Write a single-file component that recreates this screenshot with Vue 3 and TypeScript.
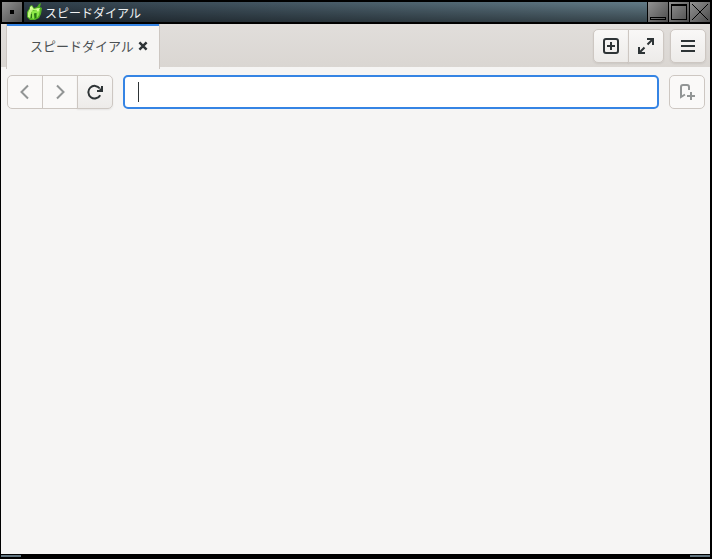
<script setup lang="ts">
import { ref } from 'vue'

const title = ref('スピードダイアル')
const address = ref('')
</script>

<template>
  <div class="window">
    <header class="titlebar">
      <button class="frame-btn" type="button" aria-label="Window menu">
        <svg width="20" height="20" viewBox="0 0 20 20" shape-rendering="crispEdges"><rect x="8" y="8" width="4" height="4" /></svg>
      </button>
      <div class="caption">
        <svg class="app-icon" width="16" height="18" viewBox="0 0 16 18">
          <path d="M4 3L6 2L8 5L11 4L13 1L15 0L14 4L16 5L15 11L13 15L9 17L4 17L1 14L1 9L3 6Z" fill="#4fae22" />
          <path d="M3 7L2 10L2 14L4 15L5 10L7 7L10 7L14 6L12 5L8 6L6 4Z" fill="#c0f67e" />
          <path d="M6 8L10 7L14 7L13 12L11 15L11 10L8 10L8 16L5 15Z" fill="#8ce648" />
          <path d="M4 4L6 3L7 6L4 7Z M10 6L14 5L12 9Z" fill="#d8ff9c" />
          <path d="M5 11L6 11L6 15L5 15Z M8 11L10 10L10 15L9 15Z" fill="#2b721a" />
        </svg>
        <span class="caption-text">{{ title }}</span>
      </div>
      <button class="frame-btn" type="button" aria-label="Minimize">
        <svg width="20" height="20" viewBox="0 0 20 20" shape-rendering="crispEdges"><rect x="2.500" y="15.500" width="15" height="2" fill="none" stroke="#000" /></svg>
      </button>
      <button class="frame-btn" type="button" aria-label="Maximize">
        <svg width="20" height="20" viewBox="0 0 20 20" shape-rendering="crispEdges"><path d="M2.500 2.500h15v15h-15zM2 3.500h16" fill="none" stroke="#000" /></svg>
      </button>
      <button class="frame-btn" type="button" aria-label="Close">
        <svg width="20" height="20" viewBox="0 0 20 20" shape-rendering="crispEdges"><path d="M2 2L18 18M18 2L2 18" fill="none" stroke="#000" /></svg>
      </button>
    </header>

    <main class="browser">
      <div class="tabbar">
        <div class="tab">
          <span>{{ title }}</span>
          <button class="tab-close" type="button" aria-label="Close tab">
            <svg width="10" height="10" viewBox="0 0 10 10"><path d="M1.400 1.400l7.200 7.200M8.600 1.400l-7.200 7.200" fill="none" stroke="#2e3436" stroke-width="2.500" /></svg>
          </button>
        </div>
        <div class="tab-actions">
          <div class="group">
            <button class="btn" type="button" aria-label="New tab">
              <svg width="16" height="16" viewBox="0 0 16 16"><rect x="1" y="1" width="14" height="14" rx="2" fill="none" stroke="#2e3436" stroke-width="2" /><path d="M8 4v8M4 8h8" stroke="#2e3436" stroke-width="2" /></svg>
            </button>
            <button class="btn" type="button" aria-label="Fullscreen">
              <svg width="16" height="16" viewBox="0 0 16 16" fill="none" stroke="#2e3436" stroke-width="2"><path d="M9.500 6.500L15 1M9 1h6v6M6.500 9.500L1 15M1 9v6h6" /></svg>
            </button>
          </div>
          <div class="group">
            <button class="btn" type="button" aria-label="Menu">
              <svg width="16" height="16" viewBox="0 0 16 16"><path d="M1 3h14M1 8h14M1 13h14" stroke="#2e3436" stroke-width="2" /></svg>
            </button>
          </div>
        </div>
      </div>

      <nav class="toolbar">
        <div class="group">
          <button class="btn" type="button" aria-label="Back" disabled>
            <svg width="16" height="16" viewBox="0 0 16 16"><path d="M11 1.500L4.500 8L11 14.500" fill="none" stroke="#929595" stroke-width="2" /></svg>
          </button>
          <button class="btn" type="button" aria-label="Forward" disabled>
            <svg width="16" height="16" viewBox="0 0 16 16"><path d="M5 1.500L11.500 8L5 14.500" fill="none" stroke="#929595" stroke-width="2" /></svg>
          </button>
          <button class="btn" type="button" aria-label="Reload">
            <svg width="16" height="16" viewBox="0 0 16 16"><path d="M12.800 4.500A6.300 6.300 0 1 0 13.200 11.200" fill="none" stroke="#2e3436" stroke-width="2" /><path d="M16 2V8H10V6H12L14 4V2Z" fill="#2e3436" /></svg>
          </button>
        </div>
        <div class="address">
          <input v-model="address" type="text" aria-label="Address" />
          <span class="caret"></span>
        </div>
        <div class="group">
          <button class="btn" type="button" aria-label="Add bookmark" disabled>
            <svg width="16" height="16" viewBox="0 0 16 16" fill="none" stroke="#929595" stroke-width="2"><path d="M10 6V3Q10 1 8 1H4Q2 1 2 3V13L6 10.500" /><path d="M12 8v8M8 12h8" /></svg>
          </button>
        </div>
      </nav>
    </main>

    <footer class="grips"><span></span><span></span></footer>
  </div>
</template>

<style>
body {
  margin: 0;
}
</style>

<style scoped>
* {
  box-sizing: border-box;
}
.window {
  display: flex;
  flex-direction: column;
  min-height: 100vh;
  padding: 0 2px 0 1px;
  background: #000;
  font-family: "Noto Sans CJK JP", sans-serif;
}
button {
  margin: 0;
  padding: 0;
  border: 0;
  border-radius: 0;
  background: none;
}
svg {
  display: block;
  flex: none;
}
.titlebar {
  display: flex;
  gap: 1px;
  height: 24px;
  padding: 2px 0 1px 1px;
}
.frame-btn {
  width: 20px;
  height: 20px;
  background: linear-gradient(135deg, #929292, #4c4c4c);
}
.caption {
  display: flex;
  flex: 1;
  align-items: center;
  gap: 3px;
  min-width: 0;
  height: 20px;
  margin-left: 1px;
  padding-left: 2px;
  background: linear-gradient(to bottom, #00000000, #00000070), linear-gradient(to right, #303f4b, #627b87);
  color: #f0f2f3;
  font-size: 12px;
  line-height: 20px;
  white-space: nowrap;
}
.caption-text {
  padding-top: 2px;
}
.browser {
  flex: 1;
  background: #f6f5f4;
}
.tabbar {
  display: flex;
  align-items: flex-start;
  justify-content: space-between;
  height: 43px;
  padding: 0 4px 0 5px;
  background: linear-gradient(#e1dedb, #dad6d2);
}
.tab {
  display: flex;
  align-items: center;
  gap: 4px;
  height: 45px;
  padding: 0 11px 2px 23px;
  border: solid #cdc7c2;
  border-width: 0 1px;
  background: linear-gradient(#3584e4 2px, #f6f5f4 2px);
  color: #4b5052;
  font-size: 13px;
  line-height: 20px;
  white-space: nowrap;
}
.tab-actions {
  display: flex;
  gap: 6px;
  padding-top: 5px;
}
.group {
  display: flex;
}
.btn {
  display: flex;
  align-items: center;
  justify-content: center;
  width: 36px;
  height: 34px;
  border: 1px solid #cdc7c2;
  background: linear-gradient(#f9f8f7, #edebe9);
  box-shadow: 0 1px 2px #00000012;
}
.btn + .btn {
  margin-left: -1px;
}
.btn:first-child {
  border-top-left-radius: 5px;
  border-bottom-left-radius: 5px;
}
.btn:last-child {
  border-top-right-radius: 5px;
  border-bottom-right-radius: 5px;
}
.btn:disabled {
  background: #faf9f8;
  box-shadow: none;
}
.toolbar {
  display: flex;
  gap: 10px;
  padding: 8px 5px 8px 6px;
}
.address {
  position: relative;
  flex: 1;
}
.address input {
  display: block;
  width: 100%;
  height: 34px;
  padding: 0 13px;
  border: 2px solid #3584e4;
  border-radius: 5px;
  outline: 0;
  background: #fff;
  color: #2e3436;
  font: 13px "Noto Sans CJK JP", sans-serif;
}
.caret {
  position: absolute;
  top: 7px;
  left: 15px;
  width: 1px;
  height: 20px;
  background: #2e3436;
}
.grips {
  display: flex;
  justify-content: space-between;
  height: 5px;
  padding-top: 1px;
}
.grips span {
  width: 20px;
  height: 2px;
  background: #61747f;
}
</style>
